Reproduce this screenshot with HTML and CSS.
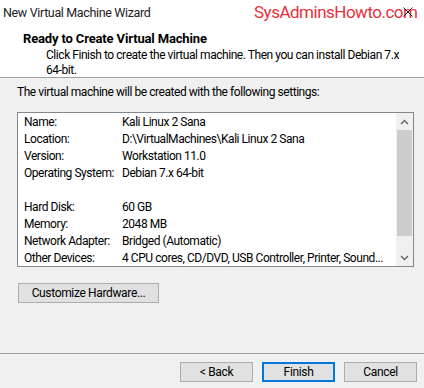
FILE: index.html
```html
<!DOCTYPE html>
<html>
  <head>
    <title>New Virtual Machine Wizard</title>
    <link rel="stylesheet" href="styles.css">
  </head>
  <body>
    <div class="window">
      <div class="top">
        <div class="titlebar">
          <span class="title">New Virtual Machine Wizard</span>
          <span class="watermark">SysAdminsHowto.com</span>
          <svg class="close" width="10" height="10" viewBox="0 0 10 10"><path d="M0.5 0.5 L9.5 9.5 M9.5 0.5 L0.5 9.5" stroke="#222" stroke-width="1"/></svg>
        </div>
        <div class="header">
          <div class="heading">Ready to Create Virtual Machine</div>
          <div class="subtext">Click Finish to create the virtual machine. Then you can install Debian 7.x 64-bit.</div>
        </div>
      </div>

      <div class="content">
        <div class="intro">The virtual machine will be created with the following settings:</div>

        <div class="listbox">
          <div class="rows">
            <div class="row"><span class="label">Name:</span><span class="value">Kali Linux 2 Sana</span></div>
            <div class="row"><span class="label">Location:</span><span class="value">D:\VirtualMachines\Kali Linux 2 Sana</span></div>
            <div class="row"><span class="label">Version:</span><span class="value">Workstation 11.0</span></div>
            <div class="row"><span class="label">Operating System:</span><span class="value">Debian 7.x 64-bit</span></div>
            <div class="row"></div>
            <div class="row"><span class="label">Hard Disk:</span><span class="value">60 GB</span></div>
            <div class="row"><span class="label">Memory:</span><span class="value">2048 MB</span></div>
            <div class="row"><span class="label">Network Adapter:</span><span class="value">Bridged (Automatic)</span></div>
            <div class="row"><span class="label">Other Devices:</span><span class="value">4 CPU cores, CD/DVD, USB Controller, Printer, Sound...</span></div>
          </div>
          <div class="scrollbar">
            <div class="arrow">
              <svg width="9" height="6" viewBox="0 0 9 6"><path d="M1 5 L4.5 1.5 L8 5" fill="none" stroke="#606060" stroke-width="1.3"/></svg>
            </div>
            <div class="thumb"></div>
            <div class="track"></div>
            <div class="arrow">
              <svg width="9" height="6" viewBox="0 0 9 6"><path d="M1 1 L4.5 4.5 L8 1" fill="none" stroke="#606060" stroke-width="1.3"/></svg>
            </div>
          </div>
        </div>

        <div class="customize">
          <button class="btn wide">Customize Hardware...</button>
        </div>
      </div>

      <div class="footer">
        <button class="btn">&lt; Back</button>
        <button class="btn default">Finish</button>
        <button class="btn">Cancel</button>
      </div>
    </div>
  </body>
</html>
```

FILE: styles.css
```css
body {
  margin: 0;
  font-family: Roboto, "Noto Sans", sans-serif;
  font-size: 12px;
  letter-spacing: -0.45px;
  color: #000;
  background-color: #f0f0f0;
}

.window {
  width: 424px;
  height: 388px;
  display: flex;
  flex-direction: column;
  background-color: #f0f0f0;
}

.top {
  background-color: #fff;
  border-bottom: 1px solid #a0a0a0;
  height: 77px;
}

.titlebar {
  height: 24px;
  display: flex;
  align-items: center;
  padding-left: 3px;
  position: relative;
}

.title {
  font-size: 12.5px;
  letter-spacing: -0.35px;
  color: #222;
}

.watermark {
  position: absolute;
  left: 254px;
  top: 0;
  line-height: 24px;
  font-size: 17px;
  letter-spacing: -0.5px;
  color: #e8303b;
}

.close {
  position: absolute;
  left: 403px;
  top: 7px;
}

.header {
  padding: 7px 10px 0 23px;
}

.heading {
  font-weight: bold;
  font-size: 13px;
  letter-spacing: -0.15px;
  line-height: 16px;
}

.subtext {
  margin-left: 23px;
  margin-top: 1px;
  line-height: 15px;
}

.content {
  padding: 6px 10px 0 17px;
  height: 276px;
  border-bottom: 1px solid #a0a0a0;
  box-sizing: border-box;
}

.intro {
  line-height: 16px;
}

.listbox {
  margin-top: 12px;
  height: 155px;
  box-sizing: border-box;
  border: 1px solid #828790;
  background-color: #fff;
  display: flex;
}

.rows {
  flex: 1;
  padding: 1px 0 0 6px;
}

.row {
  display: flex;
  height: 17px;
  line-height: 17px;
  white-space: nowrap;
}

.label {
  width: 98px;
}

.scrollbar {
  width: 17px;
  display: flex;
  flex-direction: column;
  background-color: #f0f0f0;
}

.arrow {
  height: 17px;
  display: flex;
  align-items: center;
  justify-content: center;
}

.thumb {
  height: 106px;
  margin: 0 1px;
  background-color: #cdcdcd;
}

.track {
  flex: 1;
}

.customize {
  margin-top: 16px;
}

.btn {
  font-family: inherit;
  font-size: 12px;
  letter-spacing: -0.35px;
  height: 20px;
  width: 73px;
  padding: 0;
  background-color: #e1e1e1;
  border: 1px solid #adadad;
  color: #000;
}

.btn.wide {
  width: 141px;
  margin-left: 1px;
}

.btn.default {
  border: 2px solid #0078d7;
}

.footer {
  display: flex;
  justify-content: flex-end;
  gap: 9px;
  padding: 8px 7px 0 0;
}
```
